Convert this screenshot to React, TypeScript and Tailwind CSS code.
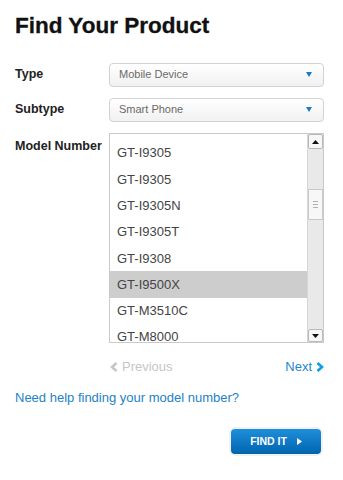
import React from "react";

const models = [
  "GT-I9305",
  "GT-I9305",
  "GT-I9305N",
  "GT-I9305T",
  "GT-I9308",
  "GT-I9500X",
  "GT-M3510C",
  "GT-M8000",
];

function SelectBox({ value }: { value: string }) {
  return (
    <div className="flex h-[24px] w-[215px] items-center justify-between rounded-[4px] border border-[#d2d2d2] bg-gradient-to-b from-white to-[#f1f1f1] pl-[9px] pr-[11px]">
      <span className="text-[11px] leading-none text-[#6a6a6a] -mt-[2px]">{value}</span>
      <svg width="6" height="5" viewBox="0 0 6 5" className="-mt-[1px]">
        <polygon points="0,0 6,0 3,5" fill="#1b7cc4" />
      </svg>
    </div>
  );
}

export default function App() {
  return (
    <div
      className="min-h-[480px] w-[343px] bg-white pl-[15px]"
      style={{ fontFamily: '"Liberation Sans", Arial, sans-serif' }}
    >
      <h1 className="pt-[12px] text-[22.5px] font-bold leading-[28px] text-[#111] [-webkit-text-stroke:0.3px_#111]">
        Find Your Product
      </h1>

      <div className="mt-[23px] flex items-center">
        <div className="w-[94px] text-[12.5px] font-bold text-[#222] -mt-[2px]">Type</div>
        <SelectBox value="Mobile Device" />
      </div>

      <div className="mt-[11px] flex items-center">
        <div className="w-[94px] text-[12.5px] font-bold text-[#222] -mt-[2px]">Subtype</div>
        <SelectBox value="Smart Phone" />
      </div>

      <div className="mt-[11px] flex">
        <div className="w-[94px] pt-[5px] text-[12.5px] font-bold leading-[16px] text-[#222]">
          Model Number
        </div>
        <div className="flex h-[210px] w-[215px] overflow-hidden border border-[#cacaca] bg-white">
          <div className="flex-1 overflow-hidden pt-[6px]">
            {models.map((m, i) => (
              <div
                key={i}
                className={`flex h-[26.3px] items-center pl-[7px] text-[13px] text-[#444] ${
                  i === 5 ? "bg-[#cdcdcd]" : ""
                }`}
              >
                {m}
              </div>
            ))}
          </div>
          <div className="flex w-[16px] flex-col border-l border-[#d6d6d6] bg-[#e9e9e9]">
            <div className="flex h-[15px] items-center justify-center rounded-[2px] border border-[#b8b8b8] bg-[#f7f7f7]">
              <svg width="7" height="4" viewBox="0 0 7 4">
                <polygon points="0,4 7,4 3.5,0" fill="#111" />
              </svg>
            </div>
            <div className="h-[40px]" />
            <div className="flex h-[31px] flex-col items-center justify-center gap-[2px] border border-[#c9c9c9] bg-[#f7f7f7]">
              <div className="h-px w-[5px] bg-[#b0b0b0]" />
              <div className="h-px w-[5px] bg-[#b0b0b0]" />
              <div className="h-px w-[5px] bg-[#b0b0b0]" />
            </div>
            <div className="flex-1" />
            <div className="flex h-[13px] items-center justify-center rounded-[2px] border border-[#b8b8b8] bg-[#f7f7f7]">
              <svg width="7" height="4" viewBox="0 0 7 4">
                <polygon points="0,0 7,0 3.5,4" fill="#111" />
              </svg>
            </div>
          </div>
        </div>
      </div>

      <div className="ml-[95px] mt-[16px] flex w-[214px] items-center justify-between text-[13px] leading-[16px]">
        <div className="flex items-center gap-[4px] text-[#c6c6c6]">
          <svg width="8" height="10" viewBox="0 0 8 10">
            <polyline points="6.5,1 2,5 6.5,9" fill="none" stroke="#c6c6c6" strokeWidth="2.6" />
          </svg>
          <span>Previous</span>
        </div>
        <div className="flex items-center gap-[4px] text-[#1d86cf]">
          <span>Next</span>
          <svg width="8" height="10" viewBox="0 0 8 10">
            <polyline points="1.5,1 6,5 1.5,9" fill="none" stroke="#0a9fe6" strokeWidth="2.6" />
          </svg>
        </div>
      </div>

      <div className="mt-[15px] text-[13px] leading-[16px] text-[#1d82c8]">
        Need help finding your model number?
      </div>

      <div className="mt-[23px] flex w-[306px] justify-end">
        <div className="flex h-[25px] w-[90px] items-center justify-center gap-[10px] rounded-[4px] bg-gradient-to-b from-[#1f8fdb] to-[#0064ae] shadow-[0_0_0_2px_#f1f1f1]">
          <span className="text-[10.5px] font-bold leading-none text-white">FIND IT</span>
          <svg width="5" height="7" viewBox="0 0 5 7">
            <polygon points="0,0 5,3.5 0,7" fill="#fff" />
          </svg>
        </div>
      </div>
    </div>
  );
}
